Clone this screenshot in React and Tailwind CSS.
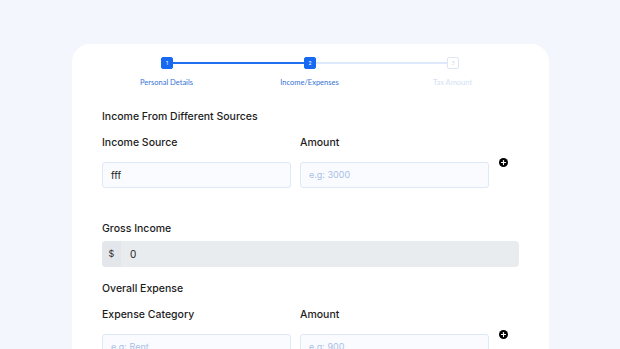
import { Plus } from 'lucide-react'

function StepBox({ n, state }) {
  const cls =
    state === 'done'
      ? 'bg-[#1769f2] text-white border-[#1769f2]'
      : 'bg-white text-[#d3def0] border-[#dce6f5]'
  return (
    <div className={`w-[12px] h-[12px] rounded-[2px] border flex items-center justify-center text-[5px] leading-none ${cls}`}>
      {n}
    </div>
  )
}

function Field({ placeholder, value }) {
  return (
    <div className="h-[26px] rounded-[3px] border border-[#dfe8f6] bg-[#f9fbff] flex items-center px-[8px]">
      {value ? (
        <span className="text-[10px] text-[#222]">{value}</span>
      ) : (
        <span className="text-[9px] text-[#a9c1e6]">{placeholder}</span>
      )}
    </div>
  )
}

function AddBtn() {
  return (
    <div className="pl-[1px] -mt-[4px]">
      <div className="w-[9px] h-[9px] rounded-full bg-black flex items-center justify-center">
        <Plus size={7} strokeWidth={4} color="white" />
      </div>
    </div>
  )
}

function Row({ left, right, leftValue }) {
  return (
    <div className="grid grid-cols-[189px_189px_1fr] gap-x-[9px]">
      <div className="text-[10.5px] font-medium text-[#1d1d1d] h-[26px]">{left}</div>
      <div className="text-[10.5px] font-medium text-[#1d1d1d] h-[26px]">Amount</div>
      <div />
      <Field placeholder={right[0]} value={leftValue} />
      <Field placeholder={right[1]} />
      <AddBtn />
    </div>
  )
}

export default function App() {
  return (
    <div className="w-[620px] h-[349px] overflow-hidden bg-[#f3f6fc] pt-[44px] px-[72px]" style={{ fontFamily: 'Inter, "Noto Sans", sans-serif' }}>
      <div className="w-[477px] h-[400px] bg-white rounded-[18px] pt-[13px]">
        {/* Stepper */}
        <div className="flex items-center w-[298px] ml-[89px]">
          <StepBox n="1" state="done" />
          <div className="flex-1 h-[2px] bg-[#1f6ff0]" />
          <StepBox n="2" state="done" />
          <div className="flex-1 h-[2px] bg-[#dde9fb]" />
          <StepBox n="3" state="todo" />
        </div>
        <div className="flex ml-[23px] mt-[9px] text-[7.5px] leading-[10px]" style={{ fontFamily: 'Lato, "Noto Sans", sans-serif' }}>
          <div className="w-[143px] text-center text-[#3573d9]">Personal Details</div>
          <div className="w-[143px] text-center text-[#3573d9]">Income/Expenses</div>
          <div className="w-[143px] text-center text-[#d4e2f6]">Tax Amount</div>
        </div>

        <div className="pl-[30px] pr-[30px] mt-[22px]">
          <div className="text-[10.5px] font-medium text-[#1d1d1d] leading-[14px]">Income From Different Sources</div>
          <div className="mt-[12px] leading-[14px]">
            <Row left="Income Source" right={['', 'e.g: 3000']} leftValue="fff" />
          </div>

          <div className="text-[10.5px] font-medium text-[#1d1d1d] leading-[14px] mt-[34px]">Gross Income</div>
          <div className="mt-[5px] h-[26px] rounded-[4px] bg-[#e9ecef] flex items-center overflow-hidden">
            <div className="w-[19px] h-full bg-[#e3e6ea] flex items-center justify-center text-[9px] text-[#333]">$</div>
            <span className="ml-[9px] text-[10px] text-[#222]">0</span>
          </div>

          <div className="text-[10.5px] font-medium text-[#1d1d1d] leading-[14px] mt-[15px]">Overall Expense</div>
          <div className="mt-[12px] leading-[14px]">
            <Row left="Expense Category" right={['e.g: Rent', 'e.g: 900']} />
          </div>
        </div>
      </div>
    </div>
  )
}
